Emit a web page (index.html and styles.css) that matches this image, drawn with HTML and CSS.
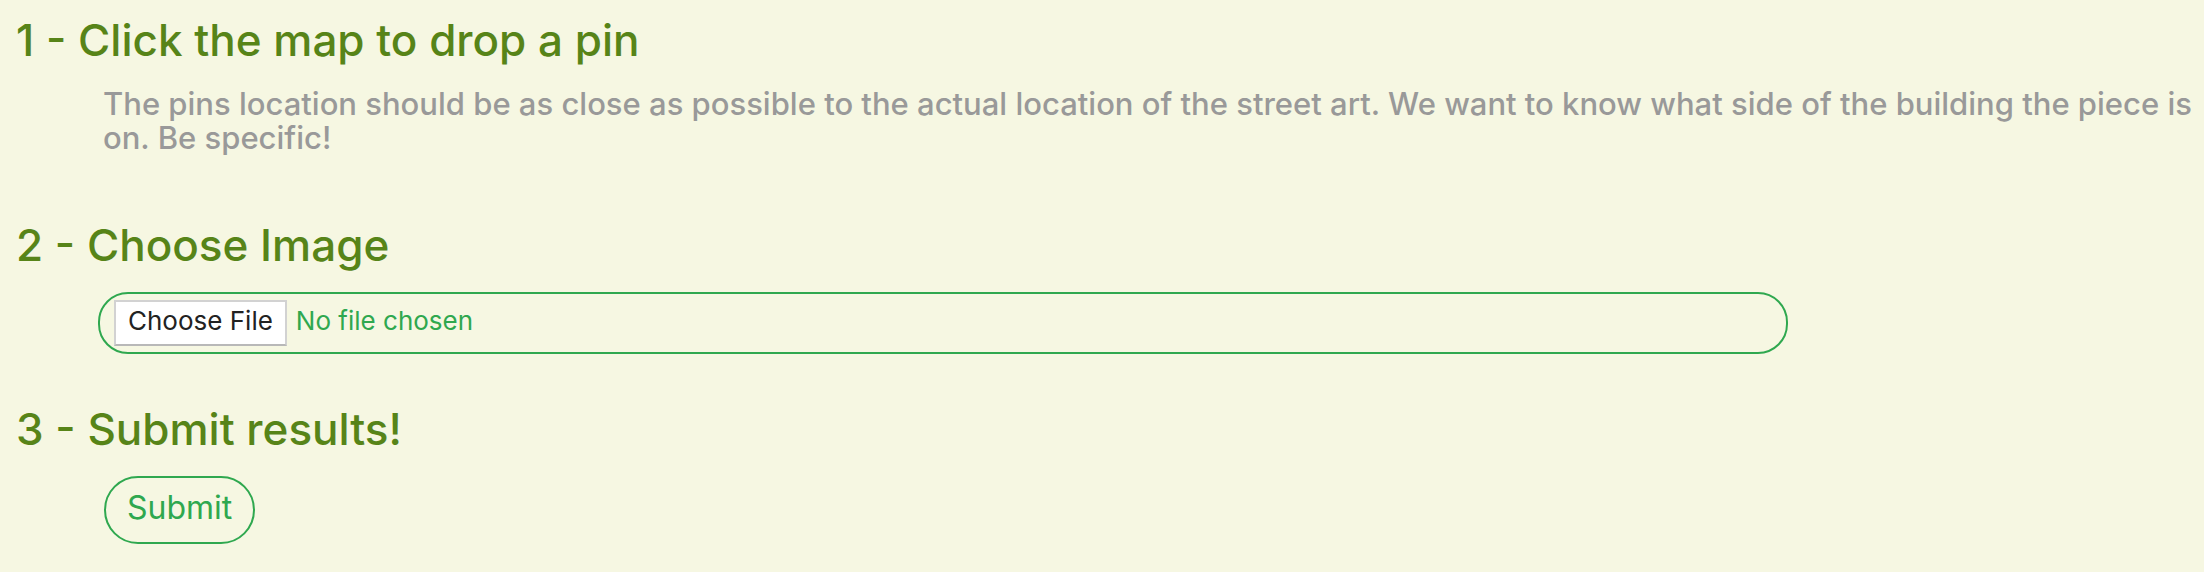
FILE: index.html
```html
<!DOCTYPE html>
<html lang="en">
<head>
<meta charset="utf-8">
<meta name="viewport" content="width=device-width, initial-scale=1">
<title>Add street art</title>
<link rel="stylesheet" href="styles.css">
</head>
<body>
<form class="steps">
  <section class="step step-pin">
    <h2 class="step-title">1 - Click the map to drop a pin</h2>
    <p class="step-help">The pins location should be as close as possible to the actual location of the street art. We want to know what side of the building the piece is on. Be specific!</p>
  </section>
  <section class="step step-image">
    <h2 class="step-title"><label for="image">2 - Choose Image</label></h2>
    <input class="file-input" type="file" id="image" name="image">
  </section>
  <section class="step">
    <h2 class="step-title">3 - Submit results!</h2>
    <button class="submit-button" type="submit">Submit</button>
  </section>
</form>
</body>
</html>
```
FILE: styles.css
```css
* {
  box-sizing: border-box;
}

body {
  margin: 0;
  background: #f6f7e2;
  font-family: Inter, "Liberation Sans", sans-serif;
}

.steps {
  padding: 8px 8px 8px 16px;
}

.step-pin {
  margin-bottom: 58px;
}

.step-image {
  margin-bottom: 43px;
}

.step-title {
  margin: 0 0 15px;
  color: #578418;
  font-size: 44px;
  font-weight: 500;
  line-height: 64px;
}

.step-help {
  margin: 0 0 0 87px;
  color: #999;
  font-size: 31px;
  font-weight: 500;
  line-height: 34px;
}

.file-input {
  display: block;
  width: 77.5%;
  margin-left: 82px;
  padding: 6px 14px;
  border: 2px solid #2fa84f;
  border-radius: 30px;
  color: #2fa84f;
  font-family: inherit;
  font-size: 26px;
}

.file-input::file-selector-button {
  height: 46px;
  margin-right: 9px;
  padding: 0 12px 6px;
  border: 2px solid #d2d2d2;
  border-bottom-color: #b8b8b8;
  background: #fff;
  color: #222;
  font: inherit;
}

.submit-button {
  display: block;
  margin-left: 88px;
  padding: 14px 21px 18px;
  border: 2px solid #2fa84f;
  border-radius: 34px;
  background: transparent;
  color: #2fa84f;
  font-family: inherit;
  font-size: 32px;
  line-height: 32px;
}
```
